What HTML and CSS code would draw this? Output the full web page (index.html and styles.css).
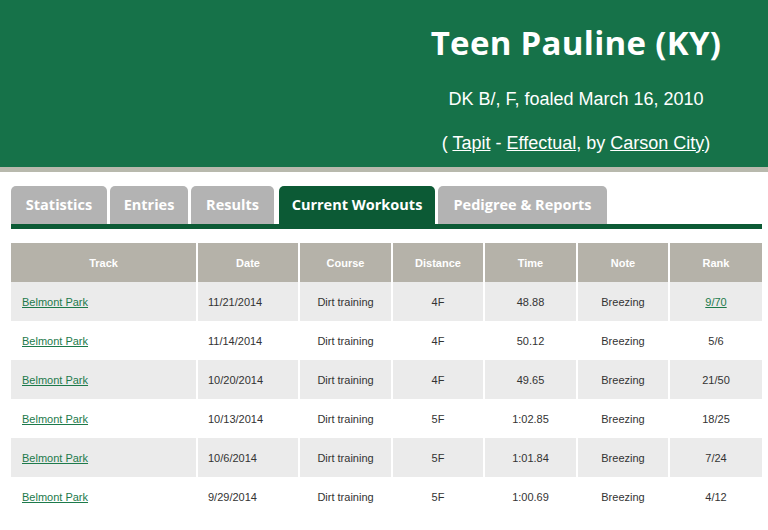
FILE: index.html
```html
<!DOCTYPE html>
<html>
<head>
<meta charset="utf-8">
<link rel="stylesheet" href="styles.css">
</head>
<body>
<header class="hero">
  <div class="hero-text">
    <h1 class="title">Teen Pauline (KY)</h1>
    <p class="sub">DK B/, F, foaled March 16, 2010</p>
    <p class="sub line3">( <a href="#">Tapit</a> - <a href="#">Effectual</a>, by <a href="#">Carson City</a>)</p>
  </div>
</header>
<main class="content">
  <nav class="tabs">
    <a class="tab t1" href="#">Statistics</a>
    <a class="tab t2" href="#">Entries</a>
    <a class="tab t3" href="#">Results</a>
    <a class="tab t4 active" href="#">Current Workouts</a>
    <a class="tab t5" href="#">Pedigree &amp; Reports</a>
  </nav>
  <table class="grid">
    <colgroup>
      <col class="c-track"><col class="c-date"><col class="c-course"><col class="c-dist"><col class="c-time"><col class="c-note"><col class="c-rank">
    </colgroup>
    <thead>
      <tr><th>Track</th><th>Date</th><th>Course</th><th>Distance</th><th>Time</th><th>Note</th><th>Rank</th></tr>
    </thead>
    <tbody>
      <tr><td class="track"><a href="#">Belmont Park</a></td><td class="date">11/21/2014</td><td>Dirt training</td><td>4F</td><td>48.88</td><td>Breezing</td><td><a href="#">9/70</a></td></tr>
      <tr><td class="track"><a href="#">Belmont Park</a></td><td class="date">11/14/2014</td><td>Dirt training</td><td>4F</td><td>50.12</td><td>Breezing</td><td>5/6</td></tr>
      <tr><td class="track"><a href="#">Belmont Park</a></td><td class="date">10/20/2014</td><td>Dirt training</td><td>4F</td><td>49.65</td><td>Breezing</td><td>21/50</td></tr>
      <tr><td class="track"><a href="#">Belmont Park</a></td><td class="date">10/13/2014</td><td>Dirt training</td><td>5F</td><td>1:02.85</td><td>Breezing</td><td>18/25</td></tr>
      <tr><td class="track"><a href="#">Belmont Park</a></td><td class="date">10/6/2014</td><td>Dirt training</td><td>5F</td><td>1:01.84</td><td>Breezing</td><td>7/24</td></tr>
      <tr><td class="track"><a href="#">Belmont Park</a></td><td class="date">9/29/2014</td><td>Dirt training</td><td>5F</td><td>1:00.69</td><td>Breezing</td><td>4/12</td></tr>
    </tbody>
  </table>
</main>
</body>
</html>
```
FILE: styles.css
```css
* { box-sizing: border-box; }
html, body { margin: 0; padding: 0; background: #fff; }
body { font-family: "Liberation Sans", Arial, sans-serif; color: #333; width: 768px; height: 530px; overflow: hidden; }

.hero {
  background: #167249;
  height: 172px;
  border-bottom: 5px solid #b8b9ad;
  display: flex;
  justify-content: flex-end;
}
.hero-text {
  width: 384px;
  text-align: center;
  color: #fff;
}
.title {
  margin: 0;
  padding-top: 22px;
  height: 66px;
  font-family: "Open Sans", sans-serif;
  font-weight: 700;
  font-size: 33px;
  line-height: 42px;
  letter-spacing: 0.3px;
}
.sub {
  margin: 0;
  font-size: 18px;
  line-height: 24px;
  height: 44px;
  padding-top: 21px;
}
.line3 { padding-top: 0; margin-top: 21px; }
.sub a { color: #fff; text-decoration: underline; }

.content { padding: 14px 6px 0 11px; }

.tabs {
  display: flex;
  gap: 3px;
  border-bottom: 5px solid #0c5a35;
  height: 43px;
}
.tab {
  display: block;
  height: 38px;
  line-height: 38px;
  background: #b3b3b3;
  color: #fff;
  text-decoration: none;
  font-family: "Open Sans", sans-serif;
  font-weight: 700;
  font-size: 14.5px;
  text-align: center;
  border-radius: 5px 5px 0 0;
}
.t1 { width: 96px; }
.t2 { width: 78px; }
.t3 { width: 83px; }
.t4 { width: 156px; margin-left: 2px; }
.t5 { width: 169px; }
.tab.active { background: #0c5a35; }

.grid {
  margin-top: 14px;
  width: 751px;
  border-collapse: collapse;
  table-layout: fixed;
  font-size: 11px;
}
.c-track { width: 186px; }
.c-date { width: 102px; }
.c-course { width: 93px; }
.c-dist { width: 92px; }
.c-time { width: 93px; }
.c-note { width: 92px; }
.c-rank { width: 93px; }

.grid th, .grid td {
  height: 39px;
  padding: 0;
  text-align: center;
  border-left: 2px solid #fff;
}
.grid th:first-child, .grid td:first-child { border-left: 0; }
.grid th {
  background: #b5b2a9;
  color: #fff;
  font-weight: 700;
  font-size: 11px;
}
.grid tbody tr:nth-child(odd) td { background: #ebebeb; }
.grid td.track { text-align: left; padding-left: 11px; }
.grid td.date { text-align: left; padding-left: 10px; }
.grid td a { color: #1d7a4b; text-decoration: underline; }
```
